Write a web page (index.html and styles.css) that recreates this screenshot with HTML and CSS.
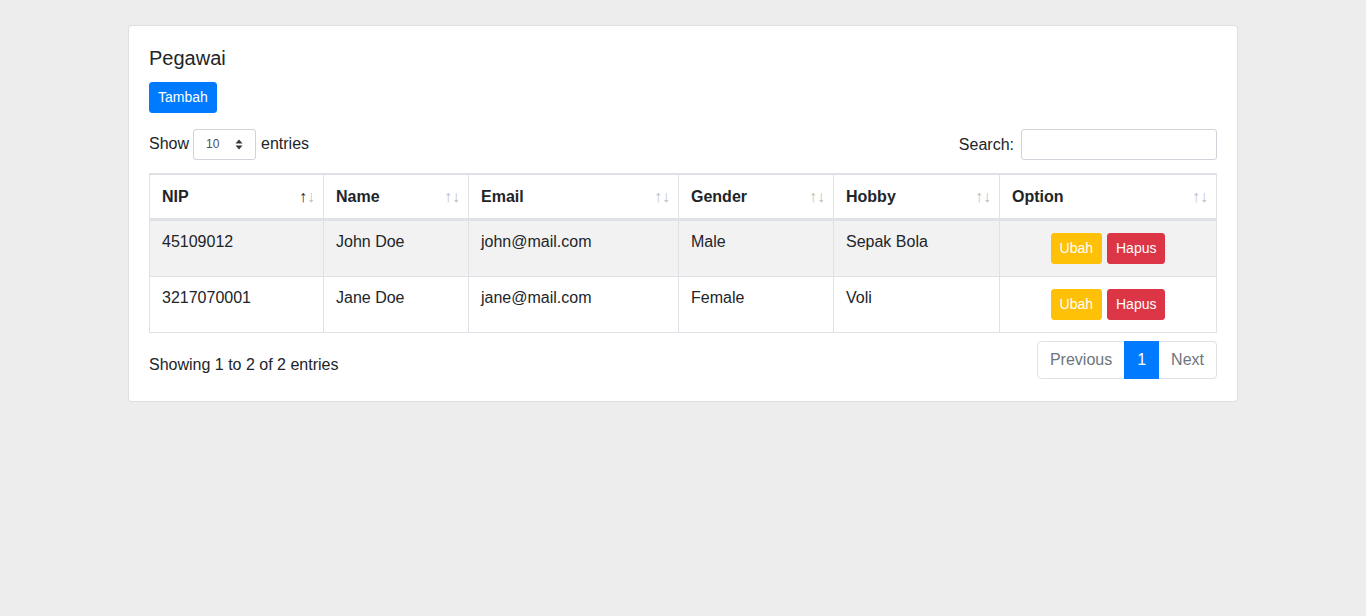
FILE: index.html
```html
<!DOCTYPE html>
<html lang="id">
<head>
<meta charset="utf-8">
<title>Pegawai</title>
<link rel="stylesheet" href="styles.css">
</head>
<body>
<div class="container">
  <div class="card">
    <h5 class="card-title">Pegawai</h5>
    <div class="actions"><button class="btn btn-sm btn-primary">Tambah</button></div>
    <div class="dt-top">
      <label class="dt-length">Show
        <span class="select-wrap">
          <select class="select-sm"><option>10</option><option>25</option><option>50</option><option>100</option></select>
          <svg class="caret" width="8" height="11" viewBox="0 0 8 11"><path d="M4 0.5 L7.5 4.5 H0.5 Z M4 10.5 L7.5 6.5 H0.5 Z" fill="#343a40"/></svg>
        </span>
        entries</label>
      <label class="dt-search">Search:<input type="search" class="search-input"></label>
    </div>
    <table class="data-table">
      <thead>
        <tr>
          <th class="sort asc c1">NIP</th>
          <th class="sort c2">Name</th>
          <th class="sort c3">Email</th>
          <th class="sort c4">Gender</th>
          <th class="sort c5">Hobby</th>
          <th class="sort c6">Option</th>
        </tr>
      </thead>
      <tbody>
        <tr class="odd">
          <td>45109012</td>
          <td>John Doe</td>
          <td>john@mail.com</td>
          <td>Male</td>
          <td>Sepak Bola</td>
          <td class="opt"><div class="opt-btns"><button class="btn btn-sm btn-warning">Ubah</button><button class="btn btn-sm btn-danger">Hapus</button></div></td>
        </tr>
        <tr>
          <td>3217070001</td>
          <td>Jane Doe</td>
          <td>jane@mail.com</td>
          <td>Female</td>
          <td>Voli</td>
          <td class="opt"><div class="opt-btns"><button class="btn btn-sm btn-warning">Ubah</button><button class="btn btn-sm btn-danger">Hapus</button></div></td>
        </tr>
      </tbody>
    </table>
    <div class="dt-bottom">
      <div class="dt-info">Showing 1 to 2 of 2 entries</div>
      <ul class="pagination">
        <li class="page-item disabled"><a class="page-link">Previous</a></li>
        <li class="page-item active"><a class="page-link">1</a></li>
        <li class="page-item disabled"><a class="page-link">Next</a></li>
      </ul>
    </div>
  </div>
</div>
</body>
</html>
```

FILE: styles.css
```css
*, *::before, *::after { box-sizing: border-box; }

html, body {
  margin: 0;
  padding: 0;
}

body {
  background: #ededed;
  font-family: "Liberation Sans", Arial, Helvetica, sans-serif;
  font-size: 16px;
  line-height: 1.5;
  color: #212529;
}

.container {
  width: 1140px;
  margin: 0 auto;
  padding: 25px 15px 0;
}

.card {
  background: #fff;
  border: 1px solid rgba(0, 0, 0, 0.125);
  border-radius: 4px;
  padding: 20px;
}

.card-title {
  margin: 0 0 12px;
  font-size: 20px;
  font-weight: 400;
  line-height: 1.2;
}

.actions {
  display: flex;
  margin-bottom: 16px;
}

.btn {
  display: inline-block;
  font-family: inherit;
  font-weight: 400;
  text-align: center;
  border: 1px solid transparent;
  color: #fff;
  cursor: pointer;
}

.btn-sm {
  padding: 4px 8px;
  font-size: 14px;
  line-height: 1.5;
  border-radius: 3px;
}

.btn-primary { background: #007bff; border-color: #007bff; }
.btn-warning { background: #ffc107; border-color: #ffc107; color: #fff; }
.btn-danger { background: #dc3545; border-color: #dc3545; }

.dt-top {
  display: flex;
  justify-content: space-between;
  align-items: center;
  height: 31px;
}

.dt-length, .dt-search {
  display: flex;
  align-items: center;
  white-space: nowrap;
}

.dt-length {
  margin-top: -1px;
}

.select-wrap {
  position: relative;
  display: inline-block;
  margin: 0 5px 0 4px;
}

.select-sm {
  -webkit-appearance: none;
  appearance: none;
  width: 63px;
  height: 31px;
  padding: 0 20px 0 12px;
  font-family: inherit;
  font-size: 12px;
  color: #495057;
  background: #fff;
  border: 1px solid #ced4da;
  border-radius: 3px;
  display: block;
}

.caret {
  position: absolute;
  right: 13px;
  top: 10px;
  pointer-events: none;
}

.search-input {
  width: 196px;
  height: 31px;
  margin-left: 7px;
  padding: 4px 8px;
  font-family: inherit;
  font-size: 14px;
  border: 1px solid #ced4da;
  border-radius: 3px;
  background: #fff;
}

.data-table {
  width: 1068px;
  margin: 13px 0 6px;
  table-layout: fixed;
  border-collapse: separate;
  border-spacing: 0;
  border: 1px solid #dee2e6;
  border-right-width: 0;
}

.data-table th,
.data-table td {
  border-top: 1px solid #dee2e6;
  border-right: 1px solid #dee2e6;
  text-align: left;
}

.data-table th {
  position: relative;
  padding: 10px 30px 9px 12px;
  font-weight: 700;
  vertical-align: bottom;
  border-bottom: 2px solid #dee2e6;
}

.data-table td {
  padding: 9px 12px 11px;
  vertical-align: top;
}

.data-table td.opt {
  padding: 12px;
  text-align: center;
}

.opt-btns {
  display: flex;
  justify-content: center;
  gap: 5px;
}

.data-table tr.odd td {
  background: #f2f2f2;
}

.c1 { width: 174px; }
.c2 { width: 145px; }
.c3 { width: 210px; }
.c4 { width: 155px; }
.c5 { width: 166px; }
.c6 { width: 217px; }

.sort::before,
.sort::after {
  position: absolute;
  bottom: 9px;
  display: block;
  font-weight: 400;
  opacity: 0.3;
}

.sort::before {
  content: "\2191";
  right: 16px;
}

.sort::after {
  content: "\2193";
  right: 8px;
}

.sort.asc::before { opacity: 1; }

.dt-bottom {
  display: flex;
  justify-content: space-between;
  align-items: flex-start;
}

.dt-info {
  padding-top: 14px;
}

.pagination {
  display: flex;
  list-style: none;
  margin: 2px 0;
  padding: 0;
}

.page-link {
  display: block;
  padding: 8px 12px;
  line-height: 1.25;
  color: #007bff;
  background: #fff;
  border: 1px solid #dee2e6;
  margin-left: -1px;
}

.page-item:first-child .page-link {
  margin-left: 0;
  border-radius: 4px 0 0 4px;
}

.page-item:last-child .page-link {
  border-radius: 0 4px 4px 0;
}

.page-item.disabled .page-link {
  color: #6c757d;
}

.page-item.active .page-link {
  position: relative;
  color: #fff;
  background: #007bff;
  border-color: #007bff;
}
```
